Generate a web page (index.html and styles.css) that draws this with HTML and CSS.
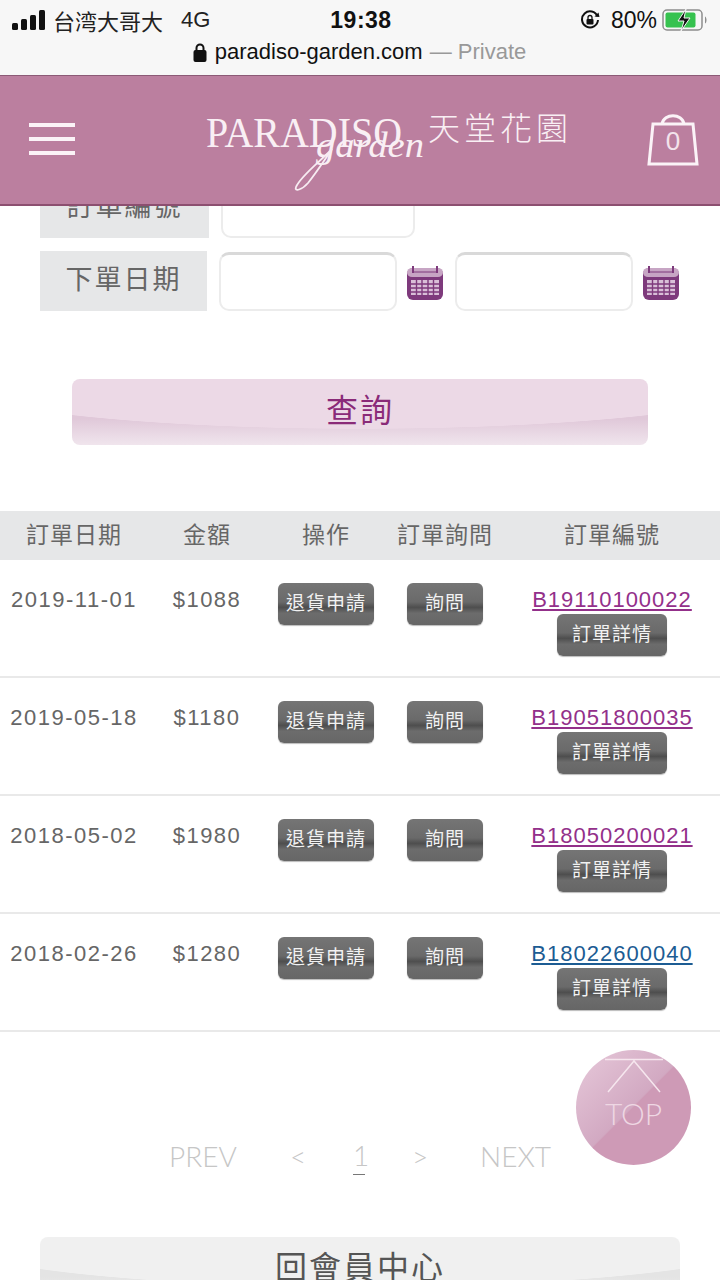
FILE: index.html
```html
<!DOCTYPE html>
<html lang="zh-Hant">
<head>
    <meta charset="UTF-8">
    <meta name="viewport" content="width=device-width, initial-scale=1.0">
    <title>天堂花園 訂單查詢</title>
    <link rel="stylesheet" href="styles.css">
</head>
<body>
    <!-- Safari status and address bar -->
    <div class="phone-bar">
        <div class="status-row">
            <div class="status-left">
                <svg class="signal" width="34" height="20" viewBox="0 0 34 20">
                    <rect x="0" y="13" width="6" height="7" rx="1.5"/>
                    <rect x="9" y="9" width="6" height="11" rx="1.5"/>
                    <rect x="18" y="5" width="6" height="15" rx="1.5"/>
                    <rect x="27" y="0" width="6" height="20" rx="1.5"/>
                </svg>
                <span class="carrier">台湾大哥大</span>
                <span class="network">4G</span>
            </div>
            <div class="status-time">19:38</div>
            <div class="status-right">
                <svg width="20" height="20" viewBox="0 0 20 20">
                    <path d="M17.5 6.5A8 8 0 1 0 18 10" fill="none" stroke="#111" stroke-width="2"/>
                    <path d="M14.5 6.5l5 .5-1-4.500z" fill="#111"/>
                    <rect x="6.500" y="9" width="7" height="5.500" rx="1" fill="#111"/>
                    <path d="M8 9V7.500a2 2 0 0 1 4 0V9" fill="none" stroke="#111" stroke-width="1.300"/>
                </svg>
                <span class="battery-pct">80%</span>
                <svg width="46" height="24" viewBox="0 0 46 24">
                    <rect x="1" y="2" width="39" height="20" rx="4" fill="none" stroke="#8d8d8d" stroke-width="1.500"/>
                    <rect x="3.500" y="4.500" width="30" height="15" rx="2" fill="#36c24f"/>
                    <path d="M24 1l-8 12h6l-3 10 9-13h-6z" fill="#111" stroke="#f7f7f7" stroke-width="1"/>
                    <path d="M43 8.500c2 1 2 6 0 7z" fill="#8d8d8d"/>
                </svg>
            </div>
        </div>
        <div class="url-row">
            <svg width="14" height="19" viewBox="0 0 14 19">
                <rect x="0.500" y="7" width="13" height="12" rx="2" fill="#111"/>
                <path d="M3.500 8V5a3.500 3.500 0 0 1 7 0v3" fill="none" stroke="#111" stroke-width="2"/>
            </svg>
            <span class="url">paradiso-garden.com</span>
            <span class="url-private">— Private</span>
        </div>
    </div>

    <header class="site-header">
        <div class="menu-btn"><span></span><span></span><span></span></div>
        <div class="logo">
            <svg class="logo-mark" width="226" height="90" viewBox="0 0 226 90">
                <text class="logo-serif" x="0" y="46" textLength="196" lengthAdjust="spacingAndGlyphs">PARADISO</text>
                <text class="logo-script" x="110" y="56" textLength="108" lengthAdjust="spacingAndGlyphs">garden</text>
                <path d="M124 50C112 62 94 76 90 86c-2 5 6 3 12-4 8-10 16-22 24-34" fill="none" stroke="#f7ecf2" stroke-width="1.800"/>
            </svg>
            <span class="logo-zh">天堂花園</span>
        </div>
        <div class="cart">
            <svg width="54" height="56" viewBox="0 0 54 56">
                <path d="M7 12h40l4 40H3z" fill="none" stroke="#fbf3f7" stroke-width="3"/>
                <path d="M16 12c2-11 20-11 22 0" fill="none" stroke="#fbf3f7" stroke-width="3"/>
            </svg>
            <span class="cart-count">0</span>
        </div>
    </header>

    <main class="content">
        <section class="search-form">
            <div class="form-row">
                <div class="form-label">訂單編號</div>
                <div class="field field-wide"></div>
            </div>
            <div class="form-row">
                <div class="form-label">下單日期</div>
                <div class="field"></div>
                <svg class="cal" width="38" height="36" viewBox="0 0 38 36">
                    <use href="#cal-icon"/>
                </svg>
                <div class="field field-second"></div>
                <svg class="cal" width="38" height="36" viewBox="0 0 38 36">
                    <use href="#cal-icon"/>
                </svg>
            </div>
        </section>

        <div class="query-wrap">
            <div class="gloss-btn query-btn">查詢</div>
        </div>

        <section class="orders">
            <div class="orders-row orders-head">
                <div>訂單日期</div>
                <div>金額</div>
                <div>操作</div>
                <div>訂單詢問</div>
                <div>訂單編號</div>
            </div>

            <div class="orders-row order">
                <div class="date">2019-11-01</div>
                <div class="amount">$1088</div>
                <div><span class="dark-btn">退貨申請</span></div>
                <div><span class="dark-btn">詢問</span></div>
                <div class="order-no">
                    <a class="order-link" href="#">B19110100022</a>
                    <span class="dark-btn detail-btn">訂單詳情</span>
                </div>
            </div>
            <div class="orders-row order">
                <div class="date">2019-05-18</div>
                <div class="amount">$1180</div>
                <div><span class="dark-btn">退貨申請</span></div>
                <div><span class="dark-btn">詢問</span></div>
                <div class="order-no">
                    <a class="order-link" href="#">B19051800035</a>
                    <span class="dark-btn detail-btn">訂單詳情</span>
                </div>
            </div>
            <div class="orders-row order">
                <div class="date">2018-05-02</div>
                <div class="amount">$1980</div>
                <div><span class="dark-btn">退貨申請</span></div>
                <div><span class="dark-btn">詢問</span></div>
                <div class="order-no">
                    <a class="order-link" href="#">B18050200021</a>
                    <span class="dark-btn detail-btn">訂單詳情</span>
                </div>
            </div>
            <div class="orders-row order">
                <div class="date">2018-02-26</div>
                <div class="amount">$1280</div>
                <div><span class="dark-btn">退貨申請</span></div>
                <div><span class="dark-btn">詢問</span></div>
                <div class="order-no">
                    <a class="order-link visited-not" href="#">B18022600040</a>
                    <span class="dark-btn detail-btn">訂單詳情</span>
                </div>
            </div>
        </section>

        <nav class="pager">
            <span class="pager-word">PREV</span>
            <span class="pager-arrow">&lt;</span>
            <span class="pager-num">1</span>
            <span class="pager-arrow">&gt;</span>
            <span class="pager-word">NEXT</span>
        </nav>

        <div class="back-wrap">
            <div class="gloss-btn back-btn">回會員中心</div>
        </div>
    </main>

    <!-- floating back to top -->
    <div class="to-top">
        <svg width="60" height="36" viewBox="0 0 60 36">
            <path d="M1 1.500h58M4 34L30 3l26 31" fill="none" stroke="#f6e6ee" stroke-width="1.500"/>
        </svg>
        <span class="to-top-text">TOP</span>
    </div>

    <svg width="0" height="0" class="defs">
        <defs>
            <g id="cal-icon">
                <rect x="1" y="3" width="36" height="32" rx="6" fill="#7e3a7c"/>
                <rect x="1" y="3" width="36" height="9" rx="5" fill="#c7a5c4"/>
                <path d="M6 7h26" stroke="#7e3a7c" stroke-width="1"/>
                <path d="M7 1v7M31 1v7" stroke="#7e3a7c" stroke-width="2"/>
                <path d="M5 15h28v15H5z" fill="#d9bfd8"/>
                <path d="M5 19h28M5 23h28M5 27h28M10.500 14v17M16 14v17M22 14v17M27.500 14v17" stroke="#7e3a7c" stroke-width="1.400"/>
            </g>
        </defs>
    </svg>
</body>
</html>
```

FILE: styles.css
```css
* {
    box-sizing: border-box;
}

html, body {
    margin: 0;
    height: 1280px;
    overflow: hidden;
}

body {
    position: relative;
    background: #fff;
    color: #555;
    font-family: "Liberation Sans", "Noto Sans CJK TC", sans-serif;
}

/* phone bar */
.phone-bar {
    height: 75px;
    background: #f7f7f7;
    color: #111;
}

.status-row {
    display: grid;
    grid-template-columns: 1fr auto 1fr;
    align-items: center;
    height: 40px;
    padding: 0 12px;
}

.status-left, .status-right {
    display: flex;
    align-items: center;
}

.signal {
    fill: #111;
    margin-right: 7px;
}

.carrier {
    font-size: 22px;
    color: #222;
}

.network {
    font-size: 22px;
    margin-left: 18px;
    color: #222;
}

.status-time {
    font-size: 23px;
    font-weight: bold;
    letter-spacing: 0.5px;
    padding-left: 2px;
}

.status-right {
    justify-content: flex-end;
    gap: 5px;
}

.battery-pct {
    font-size: 23px;
    margin-left: 6px;
}

.url-row {
    display: flex;
    justify-content: center;
    align-items: center;
    gap: 8px;
    height: 24px;
    font-size: 22px;
    padding-right: 1px;
}

.url-private {
    color: #999;
    margin-left: -1px;
}

/* pink header */
.site-header {
    position: relative;
    z-index: 5;
    display: flex;
    align-items: center;
    justify-content: space-between;
    height: 131px;
    padding: 0 20px 0 29px;
    background: #bb7f9f;
    border-top: 1px solid #8c5a76;
    border-bottom: 2px solid #8c4f70;
}

.menu-btn {
    display: flex;
    flex-direction: column;
    gap: 10px;
    width: 46px;
    margin-bottom: 2px;
}

.menu-btn span {
    height: 4px;
    background: #fbf3f7;
}

.logo {
    display: flex;
    align-items: flex-start;
    width: 366px;
    height: 90px;
    margin: 12px 0 0 57px;
}

.logo-mark {
    flex: none;
    overflow: visible;
}

.logo-serif {
    font-family: "Liberation Serif", serif;
    font-size: 42px;
    fill: #f9eff4;
}

.logo-script {
    font-family: "Liberation Serif", serif;
    font-style: italic;
    font-size: 36px;
    fill: #f9eff4;
}

.logo-zh {
    flex: none;
    margin: 8px 0 0 -4px;
    color: #f9eff4;
    font-size: 32px;
    line-height: 40px;
    letter-spacing: 4px;
    font-weight: 300;
    white-space: nowrap;
}

.cart {
    position: relative;
    width: 54px;
    height: 56px;
}

.cart-count {
    position: absolute;
    left: 0;
    right: 0;
    top: 14px;
    text-align: center;
    font-size: 26px;
    line-height: 30px;
    color: #f3e3ec;
}

/* search form */
.content {
    margin-top: -28px;
}

.search-form {
    display: flex;
    flex-direction: column;
    gap: 13px;
    padding: 0 40px;
}

.form-row {
    display: flex;
    align-items: center;
    height: 60px;
}

.form-label {
    width: 169px;
    height: 60px;
    line-height: 58px;
    text-align: center;
    font-size: 27px;
    letter-spacing: 2px;
    color: #666;
    background: #e6e7e8;
}

.field {
    width: 180px;
    height: 59px;
    margin-left: 12px;
    border: 2px solid #ececec;
    border-top: 3px solid #d9d9d9;
    border-radius: 10px;
    background: #fff;
}

.field-wide {
    width: 194px;
    border-top-color: #ececec;
}

.field-second {
    margin-left: 11px;
}

.cal {
    margin: 4px 0 0 9px;
    flex: none;
}

.defs {
    position: absolute;
}

.query-wrap {
    padding: 68px 72px 66px;
}

.gloss-btn {
    text-align: center;
    border-radius: 8px;
}

.query-btn {
    height: 66px;
    line-height: 64px;
    font-size: 32px;
    letter-spacing: 2px;
    color: #8a2a78;
    background:
        radial-gradient(ellipse 420px 50px at 50% 0, #ecd9e6 99%, transparent 100%),
        linear-gradient(#e0c8d9 60%, #f0e5ed);
}

/* orders table */
.orders-row {
    display: grid;
    grid-template-columns: 148px 118px 120px 118px 216px;
    text-align: center;
}

.orders-head {
    height: 49px;
    line-height: 48px;
    font-size: 23px;
    letter-spacing: 1px;
    color: #666;
    background: #e6e7e8;
}

.order {
    height: 118px;
    padding-top: 23px;
    border-bottom: 2px solid #e9e9e9;
}

.order:first-of-type {
    height: 118px;
}

.date, .amount {
    font-size: 22px;
    line-height: 34px;
    letter-spacing: 1.500px;
    color: #666;
    white-space: nowrap;
}

.dark-btn {
    display: inline-block;
    padding: 0 8px;
    height: 42px;
    line-height: 42px;
    font-size: 19px;
    letter-spacing: 1px;
    color: #f2f2f2;
    border-radius: 6px;
    background: linear-gradient(#757575, #6a6a6a 45%, #4e4e4e 58%, #6c6c6c 72%, #666);
    box-shadow: 0 1px 1px #bbb;
}

.order > div:nth-child(3) .dark-btn,
.order > div:nth-child(4) .dark-btn {
    padding: 0 8px;
}

.order > div:nth-child(4) .dark-btn {
    padding: 0 18px;
}

.order-no {
    display: flex;
    flex-direction: column;
    align-items: center;
}

.order-link {
    font-size: 22px;
    line-height: 34px;
    letter-spacing: 1px;
    color: #93308a;
    white-space: nowrap;
}

.visited-not {
    color: #1c5c93;
}

.detail-btn {
    margin-top: -3px;
    padding: 0 15px;
}

/* pager */
.pager {
    display: flex;
    align-items: center;
    justify-content: center;
    height: 34px;
    margin-top: 107px;
    padding-right: 2px;
    font-family: Lato, "Liberation Sans", sans-serif;
    font-weight: 300;
    font-size: 28px;
    color: #c6c6c6;
}

.pager-word {
    width: 70px;
    text-align: center;
}

.pager-arrow {
    width: 20px;
    text-align: center;
    margin: 0 50px;
}

.pager-num {
    width: 12px;
    text-align: center;
    margin: 0 -5px;
    padding-bottom: 2px;
    border-bottom: 1px solid #777;
}

.back-wrap {
    padding: 64px 40px 0;
}

.back-btn {
    height: 66px;
    line-height: 62px;
    font-size: 32px;
    letter-spacing: 2px;
    color: #555;
    background:
        radial-gradient(ellipse 420px 50px at 50% 0, #f0f0f0 99%, transparent 100%),
        linear-gradient(#e4e4e4 60%, #f2f2f2);
}

/* floating top button */
.to-top {
    position: absolute;
    left: 576px;
    top: 1050px;
    width: 115px;
    height: 115px;
    padding-top: 8px;
    display: flex;
    flex-direction: column;
    align-items: center;
    border-radius: 50%;
    background: linear-gradient(135deg, #e7c9da, #d2a9c2 49%, #ce9ab6 50%);
}

.to-top-text {
    margin-top: 2px;
    font-family: Lato, "Liberation Sans", sans-serif;
    font-weight: 300;
    font-size: 30px;
    line-height: 34px;
    color: #eed7e3;
}
```
